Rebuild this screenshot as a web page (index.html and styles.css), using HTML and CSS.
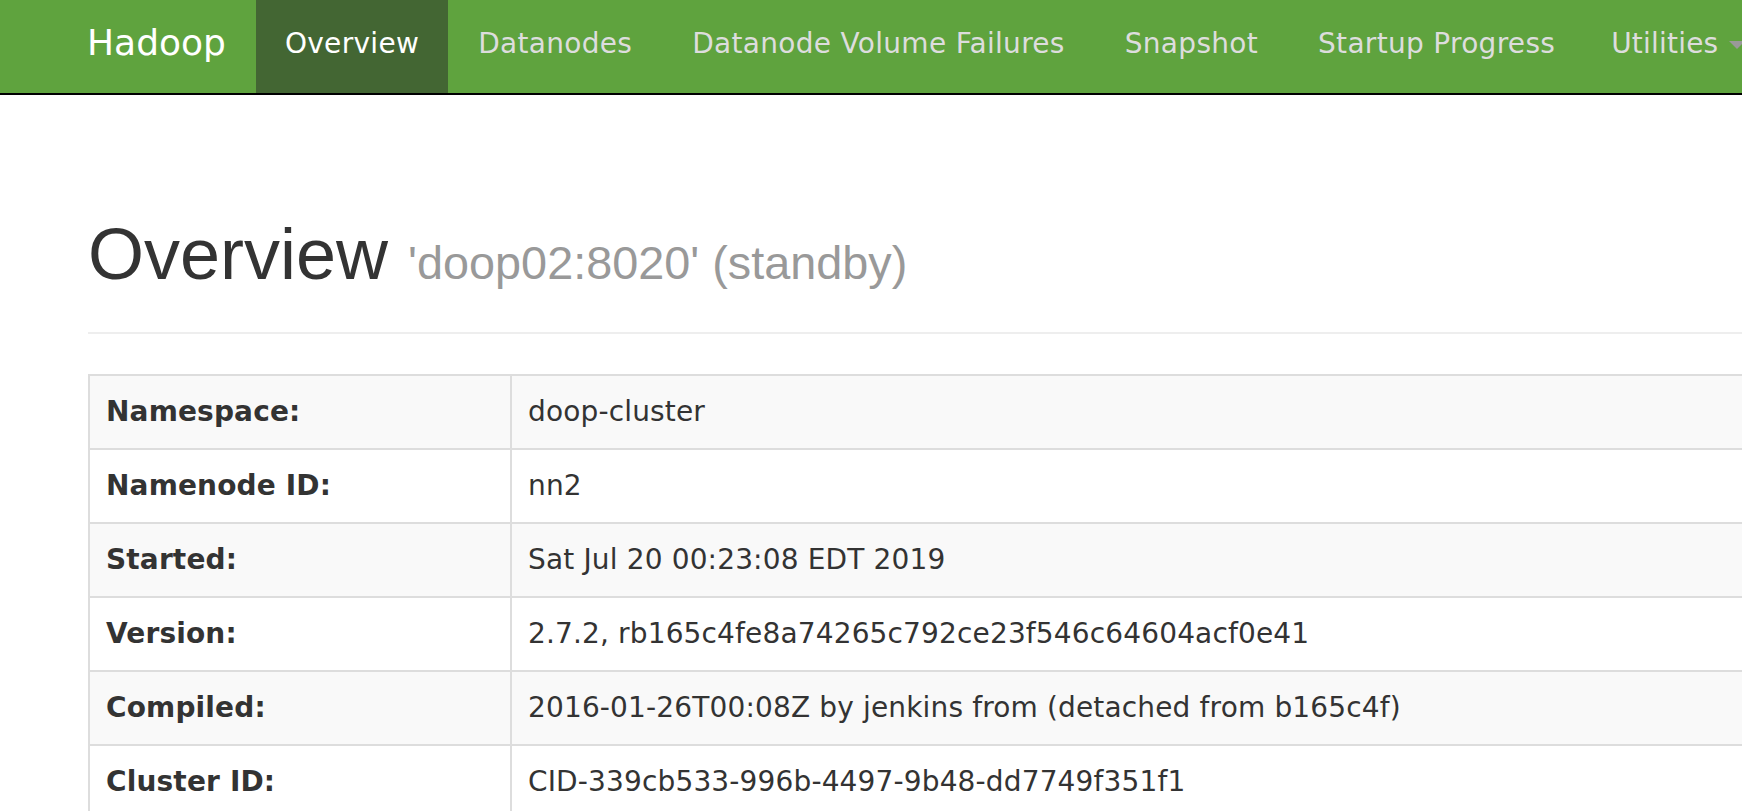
FILE: index.html
```
<!DOCTYPE html>
<html lang="en">
<head>
<meta charset="utf-8">
<title>Namenode information</title>
<link rel="stylesheet" href="styles.css">
</head>
<body>
<header class="navbar">
  <div class="navbar-inner">
    <a class="brand" href="#">Hadoop</a>
    <ul class="nav">
      <li class="active"><a href="#">Overview</a></li>
      <li><a href="#">Datanodes</a></li>
      <li><a href="#">Datanode Volume Failures</a></li>
      <li><a href="#">Snapshot</a></li>
      <li><a href="#">Startup Progress</a></li>
      <li class="dropdown"><a href="#">Utilities <span class="caret"></span></a></li>
    </ul>
  </div>
</header>
<main class="container">
  <div class="page-header">
    <h1>Overview <small>'doop02:8020' (standby)</small></h1>
  </div>
  <table class="info">
    <tbody>
      <tr><th>Namespace:</th><td>doop-cluster</td></tr>
      <tr><th>Namenode ID:</th><td>nn2</td></tr>
      <tr><th>Started:</th><td>Sat Jul 20 00:23:08 EDT 2019</td></tr>
      <tr><th>Version:</th><td>2.7.2, rb165c4fe8a74265c792ce23f546c64604acf0e41</td></tr>
      <tr><th>Compiled:</th><td>2016-01-26T00:08Z by jenkins from (detached from b165c4f)</td></tr>
      <tr><th>Cluster ID:</th><td>CID-339cb533-996b-4497-9b48-dd7749f351f1</td></tr>
    </tbody>
  </table>
</main>
</body>
</html>
```
FILE: styles.css
```
html, body {
  margin: 0;
  padding: 0;
  overflow: hidden;
  background: #fff;
}

body {
  font-family: "DejaVu Sans", sans-serif;
  font-size: 28px;
  line-height: 40px;
  color: #333;
}

a {
  text-decoration: none;
}

.navbar {
  background: #5fa33e;
  border-bottom: 2px solid #000;
  height: 93px;
}

.navbar-inner {
  display: flex;
  align-items: stretch;
  height: 100%;
  padding-left: 57px;
  white-space: nowrap;
}

.brand {
  display: block;
  font-size: 36px;
  line-height: 40px;
  padding: 23px 30px 0 30px;
  color: #fff;
}

.nav {
  display: flex;
  list-style: none;
  margin: 0;
  padding: 0;
}

.nav li {
  display: flex;
}

.nav a {
  display: block;
  padding: 24px 30px 0 30px;
  color: #ddd;
  line-height: 40px;
  letter-spacing: 0.3px;
}

.nav .active a {
  background: #436633;
  color: #fff;
  padding: 24px 29px 0 29px;
}

.nav .dropdown a {
  padding-left: 26px;
  letter-spacing: 0.2px;
}

.caret {
  display: inline-block;
  width: 0;
  height: 0;
  margin-left: 2px;
  vertical-align: middle;
  border-top: 8px solid #999;
  border-left: 8px solid transparent;
  border-right: 8px solid transparent;
}

.container {
  padding: 0 0 0 88px;
}

.page-header {
  margin: 120px 0 40px;
  padding-bottom: 18px;
  border-bottom: 2px solid #eee;
}

.page-header h1 {
  margin: 0 0 20px;
  font-family: "Liberation Sans", Arial, sans-serif;
  font-size: 72px;
  font-weight: 500;
  line-height: 1.1;
  color: #333;
}

.page-header small {
  font-size: 65%;
  color: #999;
  font-weight: normal;
}

.info {
  width: 1800px;
  border-collapse: collapse;
  border: 2px solid #ddd;
  table-layout: fixed;
}

.info th,
.info td {
  border: 2px solid #ddd;
  padding: 16px;
  text-align: left;
  vertical-align: top;
  line-height: 40px;
  white-space: nowrap;
  letter-spacing: 0.15px;
}

.info th {
  width: 388px;
  font-weight: bold;
}

.info tr:nth-child(odd) {
  background: #f9f9f9;
}
```
